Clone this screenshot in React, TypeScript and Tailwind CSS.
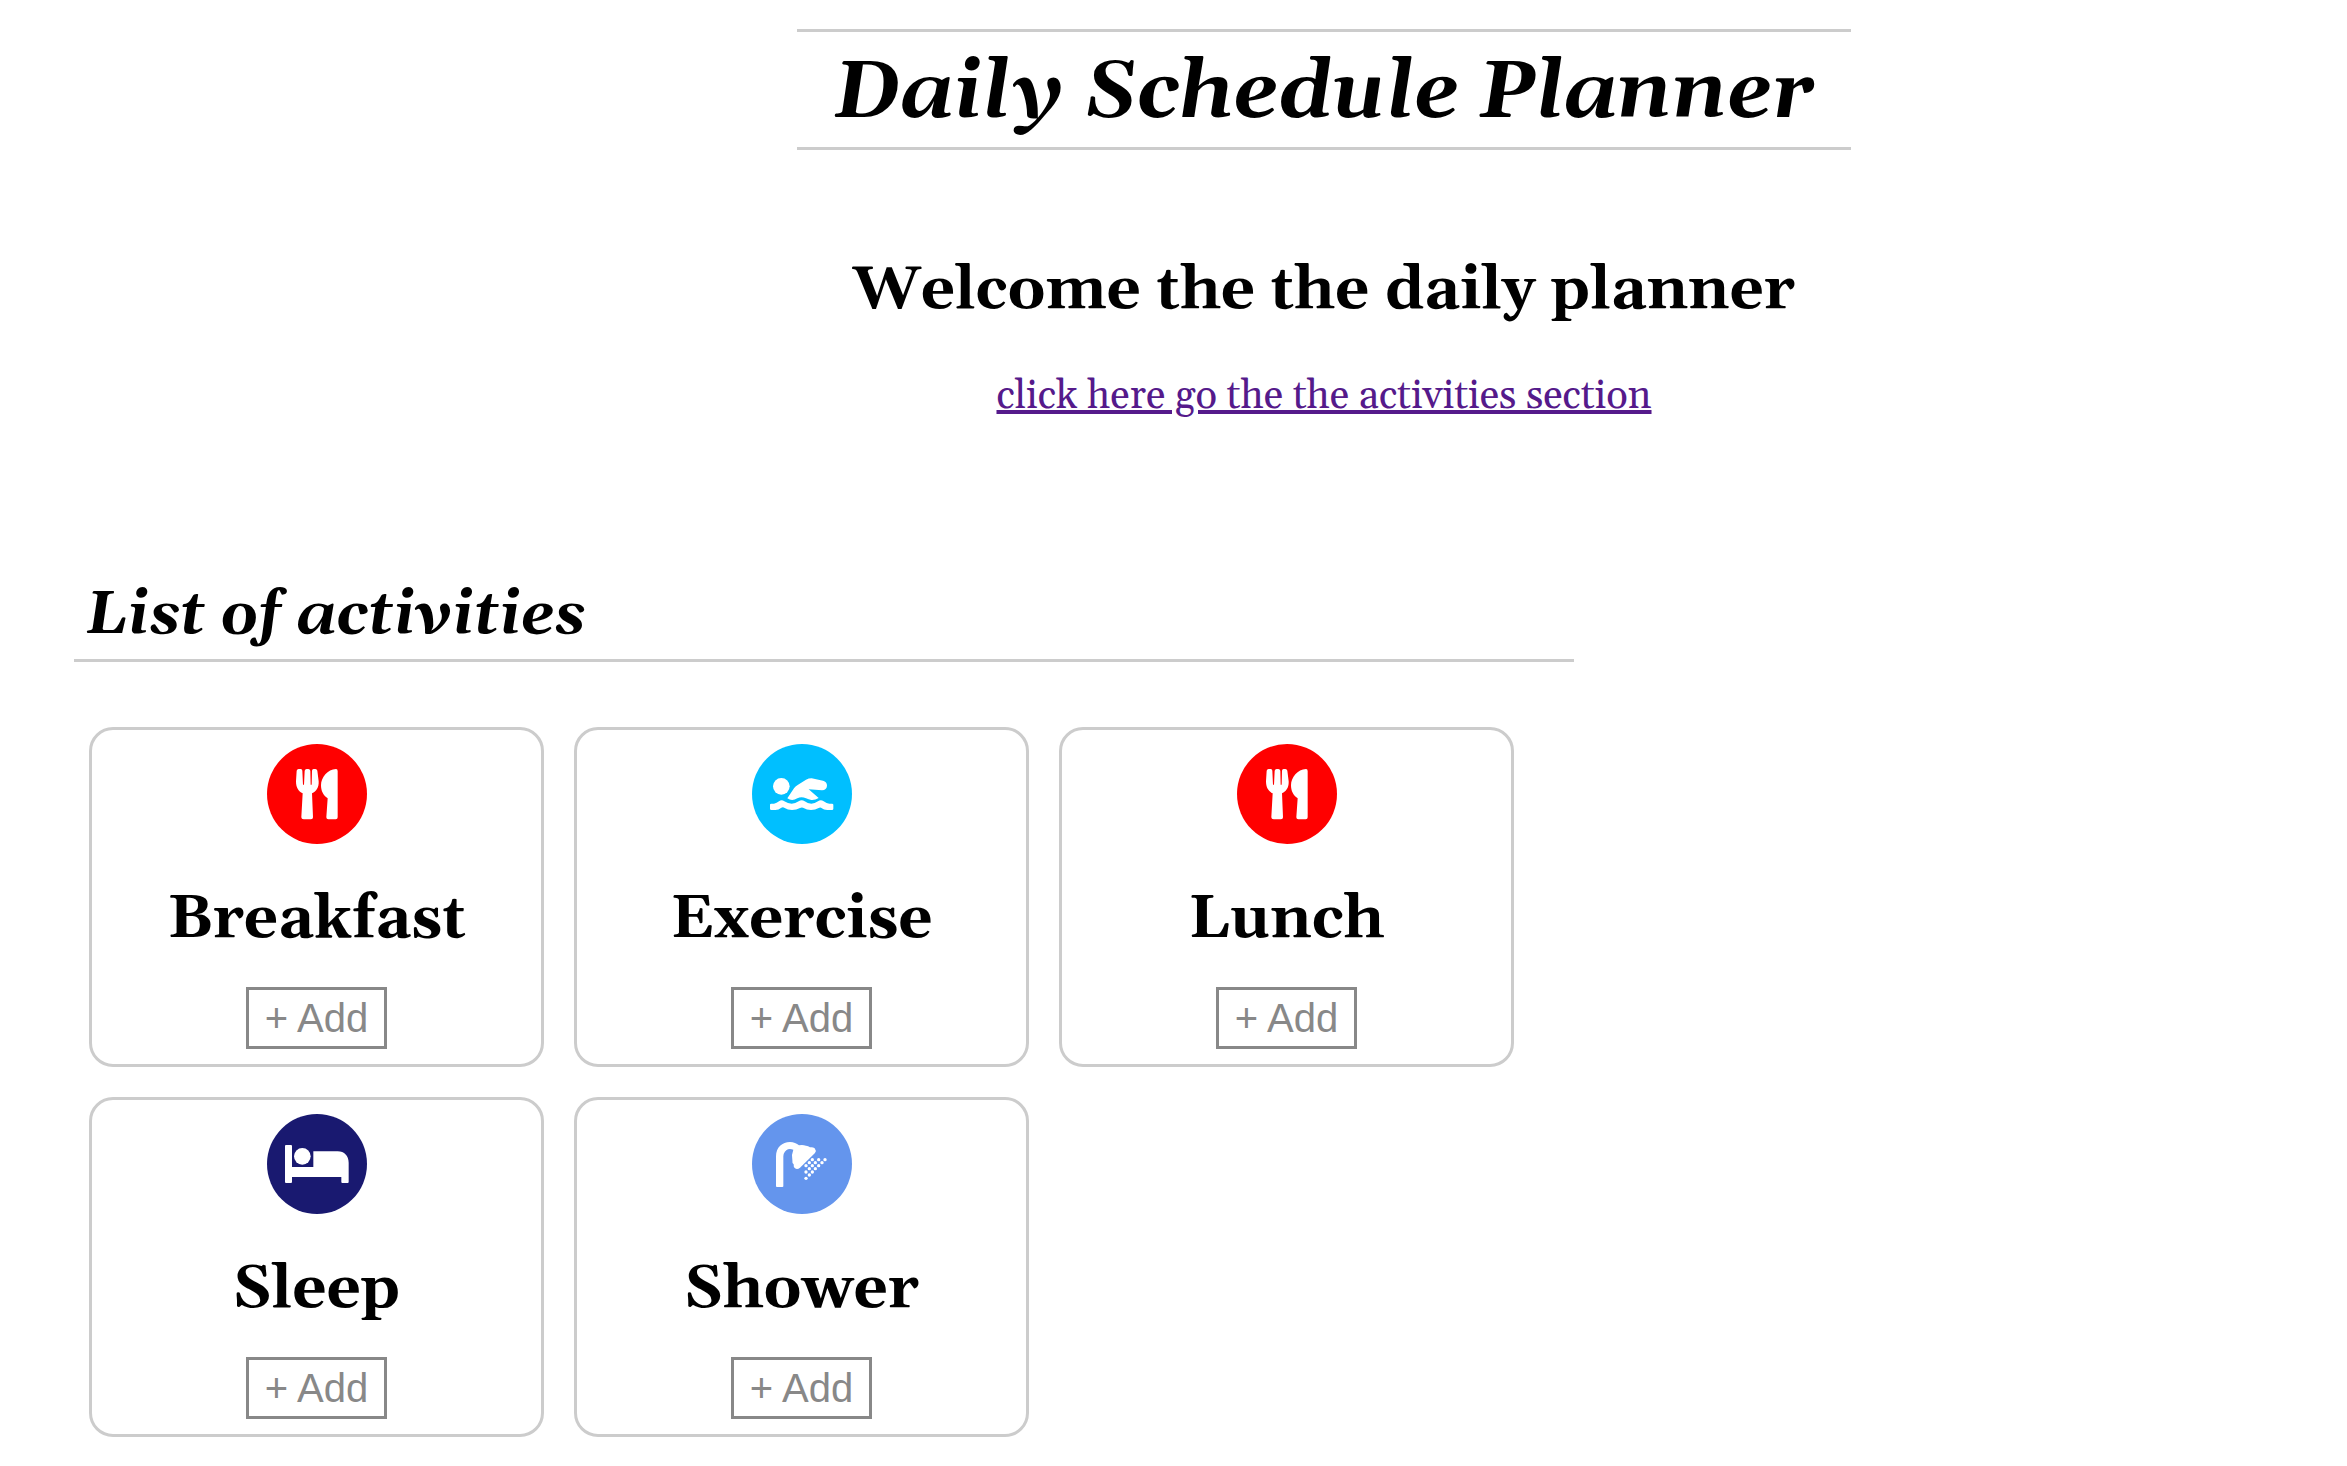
import React from "react";

type IconName = "meal" | "swim" | "bed" | "shower";

const activities: { name: string; icon: IconName; color: string }[] = [
  { name: "Breakfast", icon: "meal", color: "bg-[#ff0000]" },
  { name: "Exercise", icon: "swim", color: "bg-[#00bfff]" },
  { name: "Lunch", icon: "meal", color: "bg-[#ff0000]" },
  { name: "Sleep", icon: "bed", color: "bg-[#191970]" },
  { name: "Shower", icon: "shower", color: "bg-[#6495ed]" },
];

// Water drops below the shower head, on a diagonal lattice.
const drops = [
  [181, 137], [200, 137], [219, 137],
  [172, 146], [190, 146], [210, 146],
  [162, 155], [181, 155], [200, 155],
  [172, 164], [190, 164],
  [162, 174], [181, 174],
  [172, 183],
  [162, 193],
];

function Icon({ name }: { name: IconName }) {
  return (
    <svg viewBox="0 0 300 300" className="size-full" fill="white" aria-hidden="true">
      {name === "meal" && (
        <>
          <path d="M89 80Q90 75 95 75H101Q106 75 106 80L108 122H111L113 80Q114 75 119 75H124Q129 75 130 80L131 122H134L135 80Q135 75 140 75H145Q150 75 151 80L155 112C156 130 148 142 135 148L138 220Q138 226 132 226H110Q103 226 103 220L107 148C94 142 87 130 87 112Z" />
          <path d="M207 75Q212 75 212 81V220Q212 226 206 226H184Q178 226 178 220L182 163C168 154 162 140 162 124C162 100 182 76 207 75Z" />
        </>
      )}
      {name === "swim" && (
        <>
          <circle cx="88" cy="127" r="25" />
          <path d="M106 163L126 133Q130 127 137 123L162 107Q170 103 179 103L213 110Q225 113 225 125Q224 138 210 139L170 136L200 162Q189 169 178 168Q170 167 162 163Q148 157 136 163Q120 173 106 163Z" />
          <path d="M54 182Q54 179 58 179H66Q74 178 81 172Q89 166 97 172Q108 179 119 179Q130 179 140 172Q149 166 158 172Q167 179 178 179Q188 179 198 172Q206 166 215 172Q224 179 232 179H240Q244 179 244 182V194Q244 198 240 198H226Q216 198 207 191Q204 189 200 192Q190 198 177 198Q165 198 153 191Q149 189 144 192Q133 198 120 198Q107 198 98 192Q93 188 88 191Q80 198 70 198H58Q54 198 54 194Z" />
        </>
      )}
      {name === "bed" && (
        <>
          <circle cx="106" cy="127" r="25" />
          <path d="M54 96Q54 93 57 93H72Q75 93 75 96V159H139V112H212C232 112 245 126 245 146V204Q245 207 242 207H226Q223 207 223 204V189H75V204Q75 207 72 207H57Q54 207 54 204Z" />
        </>
      )}
      {name === "shower" && (
        <>
          <path d="M72 217V127C72 100 91 84 114 84C125 84 134 88 141 94Q151 91 162 95Q169 96 174 100Q182 98 188 103Q194 110 189 117L144 161Q136 168 129 163Q124 159 125 151Q120 147 121 137Q118 121 124 107Q104 99 95 120L94 127V217Q94 219 91 219H75Q72 219 72 217Z" />
          {drops.map(([x, y]) => (
            <circle key={`${x}-${y}`} cx={x} cy={y} r="5" />
          ))}
        </>
      )}
    </svg>
  );
}

function ActivityCard({ name, icon, color }: { name: string; icon: IconName; color: string }) {
  return (
    <li className="flex flex-col items-center rounded-3xl border-3 border-[#ccc] pt-[14px] pb-[15px]">
      <div className={`size-[100px] rounded-full ${color}`}>
        <Icon name={icon} />
      </div>
      <h3 className="mt-[42px] text-[60px] leading-[68px] font-bold">{name}</h3>
      <button
        type="button"
        aria-label={`Add ${name}`}
        className="mt-[33px] border-3 border-[#888] px-4 py-[5px] font-['Liberation_Sans',Arial,sans-serif] text-[40px] leading-[46px] text-[#888]"
      >
        + Add
      </button>
    </li>
  );
}

export default function App() {
  return (
    <div className="min-h-screen bg-white pt-[29px] pb-7 pl-[74px] font-[Georgia,Gelasio,'Liberation_Serif',serif] text-black">
      <header className="flex flex-col items-center pl-[227px] text-center">
        <h1 className="border-y-3 border-[#ccc] px-9 pt-4 pb-2 text-[80px] leading-[91px] font-bold whitespace-nowrap italic">
          Daily Schedule Planner
        </h1>
        <h2 className="mt-[107px] text-[60px] leading-[68px] font-bold">Welcome the the daily planner</h2>
        <a href="#activities" className="mt-[49px] text-[40px] leading-[46px] text-[#551a8b] underline">
          click here go the the activities section
        </a>
      </header>
      <main id="activities" className="mt-[162px] w-full max-w-[1500px]">
        <h2 className="border-b-3 border-[#ccc] px-3 pb-[9px] text-[60px] leading-[68px] font-bold italic">
          List of activities
        </h2>
        <ul className="mx-[15px] mt-[65px] grid grid-cols-[repeat(auto-fill,455px)] gap-[30px]">
          {activities.map((a) => (
            <ActivityCard key={a.name} {...a} />
          ))}
        </ul>
      </main>
    </div>
  );
}
